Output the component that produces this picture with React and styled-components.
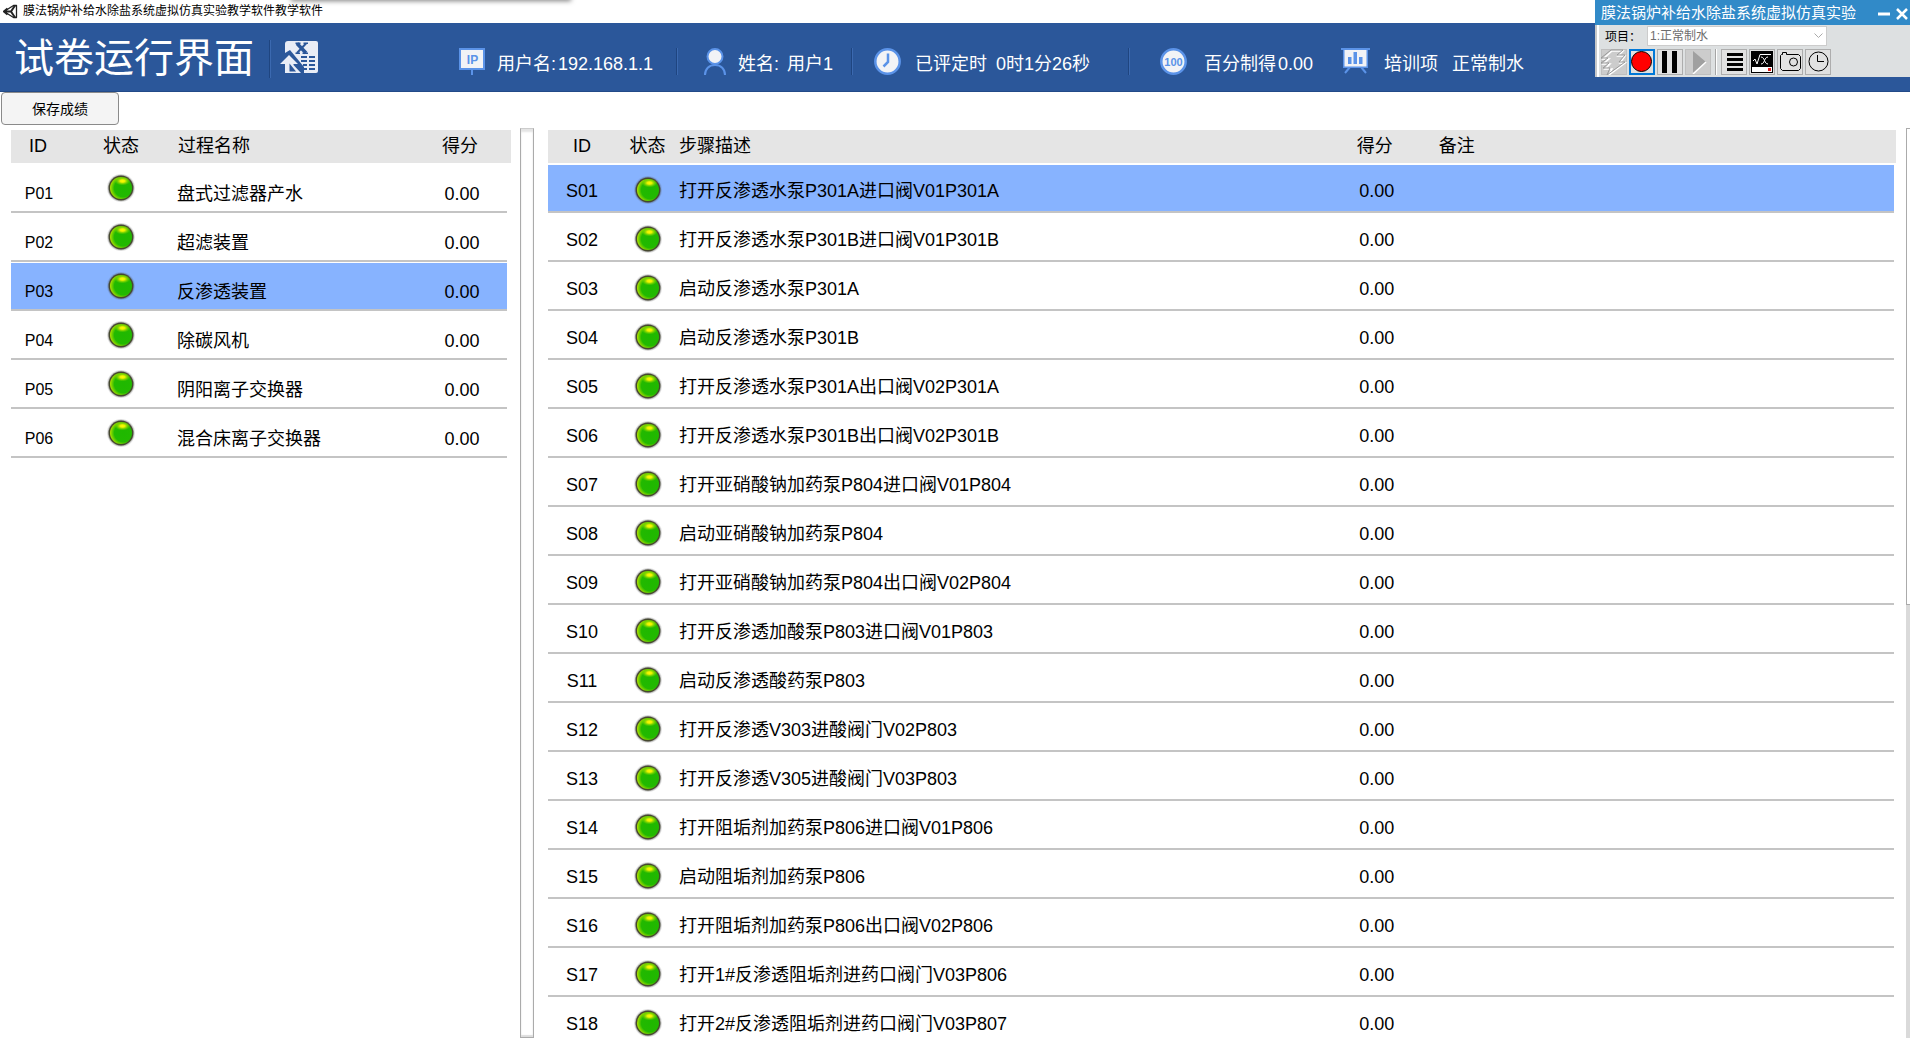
import React, { Component } from 'react';
import styled, { createGlobalStyle, css } from 'styled-components';

const colors = {
  WHITE: '#fff',
  HEADER: '#2b579a',
  ICON_BLUE: '#5b93e8',
  ICON_LIGHT: '#f2f3f6',
  SELECTED: '#87b3ff',
  LINE: '#c4c4c4',
  TABLE_HEAD: '#e5e5e5'
};

// Data

const processes = [
  { id: 'P01', name: '盘式过滤器产水', score: '0.00' },
  { id: 'P02', name: '超滤装置', score: '0.00' },
  { id: 'P03', name: '反渗透装置', score: '0.00' },
  { id: 'P04', name: '除碳风机', score: '0.00' },
  { id: 'P05', name: '阴阳离子交换器', score: '0.00' },
  { id: 'P06', name: '混合床离子交换器', score: '0.00' }
];

const steps = [
  '打开反渗透水泵P301A进口阀V01P301A',
  '打开反渗透水泵P301B进口阀V01P301B',
  '启动反渗透水泵P301A',
  '启动反渗透水泵P301B',
  '打开反渗透水泵P301A出口阀V02P301A',
  '打开反渗透水泵P301B出口阀V02P301B',
  '打开亚硝酸钠加药泵P804进口阀V01P804',
  '启动亚硝酸钠加药泵P804',
  '打开亚硝酸钠加药泵P804出口阀V02P804',
  '打开反渗透加酸泵P803进口阀V01P803',
  '启动反渗透酸药泵P803',
  '打开反渗透V303进酸阀门V02P803',
  '打开反渗透V305进酸阀门V03P803',
  '打开阻垢剂加药泵P806进口阀V01P806',
  '启动阻垢剂加药泵P806',
  '打开阻垢剂加药泵P806出口阀V02P806',
  '打开1#反渗透阻垢剂进药口阀门V03P806',
  '打开2#反渗透阻垢剂进药口阀门V03P807'
].map((name, i) => ({
  id: 'S' + String(i + 1).padStart(2, '0'),
  name,
  score: '0.00'
}));

// Styles

const GlobalStyle = createGlobalStyle`
  * {
    box-sizing: border-box;
  }

  body {
    margin: 0;
    background: ${colors.WHITE};
    font-family: "Liberation Sans", "Noto Sans CJK SC", sans-serif;
    color: #000;
  }

  button, select {
    font-family: inherit;
  }
`

const Page = styled.div`
  display: flex;
  flex-direction: column;
  height: 100vh;
  overflow: hidden;
`

const TitleStrip = styled.div`
  display: flex;
  align-items: center;
  gap: 5px;
  height: 23px;
  padding: 0 3px 1px;
  font-size: 12px;
  line-height: 16px;
`

const TopShadow = styled.div`
  position: absolute;
  top: -4px;
  left: 292px;
  width: 278px;
  height: 4px;
  box-shadow: 0 0 5px 1px hsla(0, 0%, 0%, 0.5);
`

const Header = styled.header`
  display: flex;
  align-items: center;
  height: 69px;
  padding-left: 14px;
  background: ${colors.HEADER};
  border-bottom: 1px solid #224a88;
  color: ${colors.WHITE};
`

const HeaderTitle = styled.h1`
  margin: 0;
  padding-top: 2px;
  font-size: 40px;
  line-height: 56px;
  font-weight: normal;
  white-space: nowrap;
`

const ExportButton = styled.button`
  display: flex;
  align-items: center;
  height: 38px;
  margin: 4px 0 0 15px;
  padding: 0 0 4px 10px;
  background: transparent;
  border: 0;
  border-left: 1px solid #1f4580;
  box-shadow: inset 1px 0 0 #3b69b0;
`

const Stats = styled.div`
  display: flex;
  margin-left: 141px;
  padding-top: 8px;
`

const Stat = styled.div`
  display: flex;
  align-items: center;
  gap: ${props => props.$gap || 12}px;
  flex: 0 0 ${props => props.$width}px;
  height: 27px;
  padding-left: ${props => props.$pad || 0}px;
  font-size: 18px;
  line-height: 24px;
  white-space: nowrap;

  ${props => props.$divider && css`
    border-right: 1px solid #3b69b0;
    box-shadow: inset -1px 0 0 #1f4580;
  `}
`

const StatText = styled.span`
  display: flex;
  gap: ${props => props.$gap || 0}px;
  padding-top: 6px;
`

const ActionBar = styled.div`
  height: 36px;
  padding-left: 1px;
`

const SaveButton = styled.button`
  width: 118px;
  height: 33px;
  padding: 0 0 2px;
  background: #f4f4f4;
  border: 1px solid #8a8a8a;
  border-radius: 4px;
  font-size: 14px;
  color: #000;
`

const Content = styled.main`
  display: flex;
  flex: 1;
  min-height: 0;
`

const Panel = styled.section`
  flex: ${props => props.$width ? `0 0 ${props.$width}px` : '1'};
  min-width: 0;
  overflow: hidden;
  padding: 2px 0 0 ${props => props.$inset || 0}px;
`

const Splitter = styled.div`
  flex: 0 0 14px;
  margin: 0 14px 0 9px;
  background: ${colors.WHITE};
  border: 1px solid #ababab;
  border-top-color: #ccc;
  box-shadow: inset 0 3px 2px #e4e4e4, inset 0 -2px 1px #ddd;
`

const ScrollTrack = styled.div`
  flex: 0 0 4px;
  margin-left: 10px;
  background: #dadada;
`

const ScrollThumb = styled.div`
  height: 477px;
  max-height: 100%;
  background: ${colors.WHITE};
  border: 1px solid #ababab;
  border-right: 0;
`

const Table = styled.table`
  width: 100%;
  table-layout: fixed;
  border-collapse: separate;
  border-spacing: 0;
  font-size: 18px;
  line-height: 24px;
  white-space: nowrap;
`

const HeadCell = styled.th`
  height: 34px;
  padding: 0 ${props => props.$padRight || 0}px 2px ${props => props.$pad || 0}px;
  background: ${colors.TABLE_HEAD};
  border-bottom: 1px solid ${colors.WHITE};
  font-weight: normal;
  text-align: ${props => props.$left ? 'left' : 'center'};
`

const Row = styled.tr`
  cursor: pointer;

  td {
    background: ${props => props.$selected ? colors.SELECTED : colors.WHITE};
  }
`

const Cell = styled.td`
  height: 49px;
  padding: ${props => props.$drop || 0}px 0 0 ${props => props.$pad || 0}px;
  border-top: 1px solid ${colors.WHITE};
  border-bottom: 2px solid ${colors.LINE};
  font-size: ${props => props.$small ? 16 : 18}px;
  text-align: ${props => props.$left ? 'left' : 'center'};

  svg {
    display: block;
    margin: 0 auto;
  }
`

const ToolWindow = styled.aside`
  position: absolute;
  top: 0;
  right: 0;
  width: 315px;
  background: #dde0e1;
  font-size: 12px;
`

const ToolTitle = styled.div`
  display: flex;
  align-items: center;
  height: 25px;
  padding: 0 2px 0 6px;
  background: #318ac8;
  font-size: 15px;
  line-height: 20px;
  color: ${colors.WHITE};
  white-space: nowrap;
`

const ToolBody = styled.div`
  border-left: 2px solid #c8c8c8;
  box-shadow: inset 2px 0 0 ${colors.WHITE};
`

const WindowButton = styled.button`
  display: flex;
  margin-left: ${props => props.$auto ? 'auto' : '5px'};
  padding: 0;
  background: transparent;
  border: 0;
`

const ProjectRow = styled.div`
  display: flex;
  align-items: center;
  height: 22px;
  padding-left: 8px;
`

const ProjectLabel = styled.label`
  width: 42px;
  padding-bottom: 1px;
`

const SelectBox = styled.div`
  display: flex;
  position: relative;
  width: 180px;

  svg {
    position: absolute;
    top: 7px;
    right: 4px;
    pointer-events: none;
  }
`

const ProjectSelect = styled.select`
  appearance: none;
  width: 100%;
  height: 20px;
  padding: 0 2px;
  background: ${colors.WHITE};
  border: 1px solid #ccc;
  border-radius: 0;
  font-size: 12px;
  color: #6d6d6d;
`

const ToolRow = styled.div`
  display: flex;
  gap: 2px;
  height: 30px;
  padding: 2px 4px;
`

const ToolButton = styled.button`
  display: flex;
  align-items: center;
  justify-content: center;
  width: 26px;
  height: 26px;
  padding: 0;
  background: ${props => props.disabled ? '#ccc' : '#e1e1e1'};
  border: ${props => props.$active ? '2px solid #0078d7' : `1px solid ${props.disabled ? '#bfbfbf' : '#adadad'}`};

  svg {
    flex: none;
  }
`

const ToolDivider = styled.div`
  width: 2px;
  margin: 0 2px;
  background: #a5a5a5;
  border-right: 1px solid ${colors.WHITE};
`

// Icons

const UnityIcon = () => (
  <svg width="15" height="15" viewBox="0 0 15 15" fill="none" stroke="#222">
    <path d="M1 7.500 10.500 1.500 13.500 1.500V13.500H10.500Z" strokeWidth="1.300" strokeLinejoin="round" />
    <path d="M1 7.500H8L12 1.500M8 7.500 12 13.500M4.500 4.500 1 7.500 4.500 10.500" strokeWidth="2" />
  </svg>
)

const ExcelIcon = () => (
  <svg width="38" height="32" viewBox="0 0 38 32">
    <path fill="#e9edf6" d="M8 0h28a2 2 0 0 1 2 2v28a2 2 0 0 1-2 2H5V3a3 3 0 0 1 3-3z" />
    <path fill={colors.HEADER} d="M5 12 10 9 24 26v6H5z" />
    <path fill="#e9edf6" d="M9 14 18 23h-4.500v1L21 32H5v-9H0z" />
    <path fill={colors.HEADER} d="M9.500 22.500 16 30.500H9.500z" />
    <path fill="none" stroke={colors.HEADER} strokeWidth="3.500" d="M17 2.500 26 12" />
    <path fill="none" stroke={colors.HEADER} strokeWidth="2" d="M26 2.500 17 12" />
    <path stroke={colors.HEADER} strokeWidth="1.500" d="M15.500 2.200h5M23.500 2.200H28M15.500 12.200h4.500M22.500 12.200H28" />
    <path stroke={colors.HEADER} strokeWidth="2" d="M21 16H27M29 16H35M21 20H27M29 20H35M23 24H27M29 24H35M24 28H27M29 28H35" />
  </svg>
)

const IpIcon = () => (
  <svg width="26" height="27" viewBox="0 0 26 27">
    <path fill={colors.ICON_BLUE} d="M0 0h26v22H14v5h-2v-5H0z" />
    <path fill={colors.ICON_LIGHT} d="M2 2h22v18H2z" />
    <text x="13.500" y="15.500" textAnchor="middle" fontSize="12" fontWeight="bold" fill={colors.ICON_BLUE}>IP</text>
  </svg>
)

const UserIcon = () => (
  <svg width="22" height="27" viewBox="0 0 22 27" fill="none" stroke={colors.ICON_BLUE} strokeWidth="2">
    <path d="M1 27C1 21 5 17 11 17S21 21 21 27" />
    <circle cx="11" cy="8.500" r="7.500" fill={colors.ICON_LIGHT} />
  </svg>
)

const ClockIcon = () => (
  <svg width="27" height="27" viewBox="0 0 27 27" fill="none" stroke={colors.ICON_BLUE}>
    <circle cx="13.500" cy="13.500" r="12.200" fill={colors.ICON_LIGHT} strokeWidth="2.500" />
    <path d="M14 5.500V14L9.500 18.500" strokeWidth="2.500" />
  </svg>
)

const ScoreIcon = () => (
  <svg width="27" height="27" viewBox="0 0 27 27">
    <circle cx="13.500" cy="13.500" r="12.200" fill={colors.ICON_LIGHT} stroke={colors.ICON_BLUE} strokeWidth="2.500" />
    <text x="13.500" y="17.500" textAnchor="middle" fontSize="11" fontWeight="bold" fill={colors.ICON_BLUE}>100</text>
  </svg>
)

const BoardIcon = () => (
  <svg width="29" height="27" viewBox="0 0 29 27">
    <path stroke={colors.ICON_BLUE} strokeWidth="2" d="M9 19 4 25M20 19 25 25" />
    <path fill={colors.ICON_BLUE} d="M0 0h29v2h-2v18H2V2H0z" />
    <path fill={colors.ICON_LIGHT} d="M3.500 2h22v16.500h-22z" />
    <path fill={colors.ICON_BLUE} d="M7 9h3.500v7H7zM12.500 4H16v12h-3.500zM18 9h3.500v7H18z" />
  </svg>
)

const Led = () => (
  <svg width="28" height="28" viewBox="0 0 28 28" role="img" aria-label="正常">
    <circle cx="14" cy="14" r="14" fill="#555" opacity=".15" />
    <circle cx="14" cy="14" r="13.200" fill="#444" opacity=".3" />
    <circle cx="14" cy="14" r="12.400" fill="#45482f" />
    <circle cx="14" cy="14" r="11" fill="url(#ledBody)" />
    <ellipse cx="15.500" cy="7" rx="8" ry="4.500" fill="url(#ledShine)" />
  </svg>
)

const LedDefs = () => (
  <svg width="0" height="0" style={{ position: 'absolute' }} aria-hidden="true">
    <defs>
      <radialGradient id="ledBody" cx=".6" cy=".5" r=".62">
        <stop offset="0" stopColor="#1fb800" />
        <stop offset=".65" stopColor="#22b900" />
        <stop offset="1" stopColor="#c0e800" />
      </radialGradient>
      <radialGradient id="ledShine">
        <stop offset="0" stopColor="#ffff00" />
        <stop offset=".3" stopColor="#e8f000" />
        <stop offset="1" stopColor="#7bd400" stopOpacity="0" />
      </radialGradient>
    </defs>
  </svg>
)

const toolIcons = {
  bolt: (
    <svg width="26" height="26" viewBox="0 0 26 26" fill="none">
      <path stroke="#fff" strokeWidth="1.500" d="M11 2H22L17 7H24L19 14H24L8 26L11 20H4L9 15H2L8 10H2Z" />
      <path stroke="#999" d="M10 1H22L16 6H24L18 13H24L6 26L9 19H2L8 14H0L7 9H0Z" />
    </svg>
  ),
  record: (
    <svg width="22" height="22" viewBox="0 0 22 22">
      <circle cx="10.500" cy="10.500" r="10" fill="#f00" stroke="#000" />
    </svg>
  ),
  pause: (
    <svg width="24" height="24" viewBox="0 0 24 24">
      <path d="M4 1h5v22H4zM14 1h5v22h-5z" />
    </svg>
  ),
  play: (
    <svg width="24" height="24" viewBox="0 0 24 24">
      <path fill="#a0a0a0" d="M7 1 20 12 7 23z" />
      <path fill="none" stroke="#fff" strokeWidth="1.500" d="M20 12 7 24" />
    </svg>
  ),
  list: (
    <svg width="24" height="24" viewBox="0 0 24 24">
      <path d="M5 3h16v3H5zM5 8h16v3H5zM5 13h16v3H5zM5 18h16v3H5z" />
    </svg>
  ),
  formula: (
    <svg width="24" height="24" viewBox="0 0 24 24">
      <path d="M1 1h22v22H1z" />
      <path fill="#fff" d="M2 17h20v5H2z" />
      <path fill="#e02020" d="M18 18h3v3h-3z" />
      <path fill="none" stroke="#fff" d="M3 11 5 9 7 14 10 4.500H21M11 7C15 7 14 14 18 14M18 7C14 7 15 14 11 14" />
    </svg>
  ),
  camera: (
    <svg width="24" height="24" viewBox="0 0 24 24" fill="none" stroke="#000">
      <path d="M3.500 4.500H4.500V2.500H8.500V4.500H20.500L22.500 6.500V18.500L20.500 20.500H4.500L2.500 18.500V5.500Z" />
      <circle cx="15.500" cy="12" r="4" />
    </svg>
  ),
  clock: (
    <svg width="24" height="24" viewBox="0 0 24 24" fill="none" stroke="#000">
      <circle cx="12.500" cy="11.500" r="9.500" />
      <path d="M11.500 5V11.500H18" />
    </svg>
  )
};

const TableRows = ({ rows, selected, onSelect, compact }) => {
  // the process list sets its text lower than the lamp
  const drop = compact ? 12 : 5;
  return (
    <tbody>
      {rows.map(row => (
        <Row key={row.id} $selected={row.id === selected} onClick={() => onSelect(row.id)}>
          <Cell $drop={drop} $small={compact}>{row.id}</Cell>
          <Cell $drop={compact ? 0 : 4}><Led /></Cell>
          <Cell $drop={drop} $left $pad={compact ? 2 : 0}>{row.name}</Cell>
          <Cell $drop={drop}>{row.score}</Cell>
          {!compact && <Cell />}
        </Row>
      ))}
    </tbody>
  )
}

class App extends Component {
  constructor(props) {
    super(props)
    this.state = {
      process: 'P03',
      step: 'S01'
    }
  }

  render() {
    return (
      <Page>
        <GlobalStyle />
        <LedDefs />
        <TopShadow />
        <TitleStrip>
          <UnityIcon />
          <span>膜法锅炉补给水除盐系统虚拟仿真实验教学软件教学软件</span>
        </TitleStrip>

        <Header>
          <HeaderTitle>试卷运行界面</HeaderTitle>
          <ExportButton type="button" aria-label="导出"><ExcelIcon /></ExportButton>
          <Stats>
            <Stat $width={219} $divider>
              <IpIcon />
              <StatText $gap={2}><span>用户名:</span><span>192.168.1.1</span></StatText>
            </Stat>
            <Stat $width={175} $pad={26} $divider>
              <UserIcon />
              <StatText $gap={8}><span>姓名:</span><span>用户1</span></StatText>
            </Stat>
            <Stat $width={277} $pad={21} $gap={14} $divider>
              <ClockIcon />
              <StatText $gap={9}><span>已评定时</span><span>0时1分26秒</span></StatText>
            </Stat>
            <Stat $width={211} $pad={30} $gap={17}>
              <ScoreIcon />
              <StatText $gap={2}><span>百分制得</span><span>0.00</span></StatText>
            </Stat>
            <Stat $width={184} $gap={14}>
              <BoardIcon />
              <StatText $gap={14}><span>培训项</span><span>正常制水</span></StatText>
            </Stat>
          </Stats>
        </Header>

        <ActionBar>
          <SaveButton type="button">保存成绩</SaveButton>
        </ActionBar>

        <Content>
          <Panel $width={511} $inset={11}>
            <Table>
              <colgroup>
                <col width="56" />
                <col width="108" />
                <col />
                <col width="90" />
                <col width="4" />
              </colgroup>
              <thead>
                <tr>
                  <HeadCell $padRight={2}>ID</HeadCell>
                  <HeadCell>状态</HeadCell>
                  <HeadCell $left $pad={3}>过程名称</HeadCell>
                  <HeadCell $padRight={4}>得分</HeadCell>
                  <HeadCell />
                </tr>
              </thead>
              <TableRows
                compact
                rows={processes}
                selected={this.state.process}
                onSelect={id => this.setState({ process: id })}
              />
            </Table>
          </Panel>
          <Splitter />
          <Panel>
            <Table>
              <colgroup>
                <col width="68" />
                <col width="63" />
                <col />
                <col width="64" />
                <col width="36%" />
                <col width="2" />
              </colgroup>
              <thead>
                <tr>
                  <HeadCell>ID</HeadCell>
                  <HeadCell>状态</HeadCell>
                  <HeadCell $left>步骤描述</HeadCell>
                  <HeadCell $padRight={4}>得分</HeadCell>
                  <HeadCell $left $pad={30}>备注</HeadCell>
                  <HeadCell />
                </tr>
              </thead>
              <TableRows
                rows={steps}
                selected={this.state.step}
                onSelect={id => this.setState({ step: id })}
              />
            </Table>
          </Panel>
          <ScrollTrack><ScrollThumb /></ScrollTrack>
        </Content>

        <ToolWindow>
          <ToolTitle>
            <span>膜法锅炉补给水除盐系统虚拟仿真实验</span>
            <WindowButton type="button" aria-label="最小化" $auto>
              <svg width="14" height="14" viewBox="0 0 14 14"><path stroke="#fff" strokeWidth="3" d="M1 8H13" /></svg>
            </WindowButton>
            <WindowButton type="button" aria-label="关闭">
              <svg width="12" height="14" viewBox="0 0 12 14"><path stroke="#fff" strokeWidth="2.500" d="M1 3 11 13M11 3 1 13" /></svg>
            </WindowButton>
          </ToolTitle>
          <ToolBody>
            <ProjectRow>
              <ProjectLabel htmlFor="project">项目：</ProjectLabel>
              <SelectBox>
                <ProjectSelect id="project">
                  <option>1:正常制水</option>
                </ProjectSelect>
                <svg width="9" height="6" viewBox="0 0 9 6" fill="none" stroke="#aaa"><path d="M.5 .5 4.500 4.500 8.500 .5" /></svg>
              </SelectBox>
            </ProjectRow>
            <ToolRow>
              <ToolButton type="button" aria-label="快速" disabled>{toolIcons.bolt}</ToolButton>
              <ToolButton type="button" aria-label="停止" $active>{toolIcons.record}</ToolButton>
              <ToolButton type="button" aria-label="暂停">{toolIcons.pause}</ToolButton>
              <ToolButton type="button" aria-label="运行" disabled>{toolIcons.play}</ToolButton>
              <ToolDivider />
              <ToolButton type="button" aria-label="列表">{toolIcons.list}</ToolButton>
              <ToolButton type="button" aria-label="公式">{toolIcons.formula}</ToolButton>
              <ToolButton type="button" aria-label="截图">{toolIcons.camera}</ToolButton>
              <ToolButton type="button" aria-label="计时">{toolIcons.clock}</ToolButton>
            </ToolRow>
          </ToolBody>
        </ToolWindow>
      </Page>
    )
  }

}

export default App;
